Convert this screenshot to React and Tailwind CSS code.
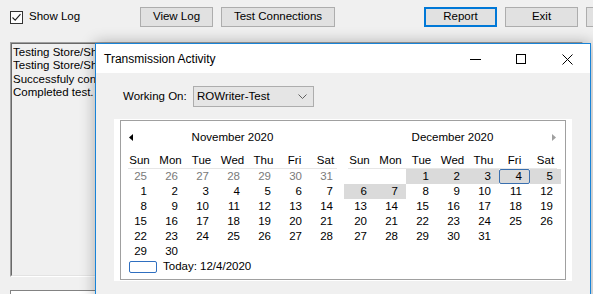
import React from "react";

const font = { fontFamily: '"Liberation Sans", Arial, sans-serif' };

function Btn({ children, w = "w-[73px]", active = false }) {
  return (
    <div
      className={`${w} h-[20px] shrink-0 flex items-center justify-center bg-[#e1e1e1] text-[11.5px] text-black ${
        active ? "border-2 border-[#0078d7]" : "border border-[#adadad]"
      }`}
    >
      {children}
    </div>
  );
}

function Month({ title, leftArrow, rightArrow, days }) {
  const heads = ["Sun", "Mon", "Tue", "Wed", "Thu", "Fri", "Sat"];
  return (
    <div className="w-[217px] shrink-0 flex flex-col">
      <div className="h-[33px] flex items-center">
        <div className="w-[4px] ml-[5px] flex items-center">
          {leftArrow && (
            <svg width="4" height="7" viewBox="0 0 4 7">
              <polygon points="4,0 0,3.5 4,7" fill="#000" />
            </svg>
          )}
        </div>
        <div className="flex-1 text-center text-[11.5px] text-black">{title}</div>
        <div className="w-[4px] mr-[5px] flex items-center">
          {rightArrow && (
            <svg width="4" height="7" viewBox="0 0 4 7">
              <polygon points="0,0 4,3.5 0,7" fill="#a0a0a0" />
            </svg>
          )}
        </div>
      </div>
      <div className="h-[14px] grid grid-cols-7">
        {heads.map((h) => (
          <div key={h} className="flex items-center justify-center text-[11.5px] text-black leading-none">
            {h}
          </div>
        ))}
      </div>
      <div className="h-[1px] mx-[4px] bg-[#e6e6e6]" />
      <div className="grid grid-cols-7">
        {days.map((d, i) => (
          <div
            key={i}
            className={`h-[15px] flex items-center justify-end text-[11.5px] leading-none ${
              d.gray ? "text-[#7a7a7a]" : "text-black"
            } ${d.hl ? "bg-[#dadada]" : ""} ${
              d.sel ? "border border-[#3a6fae] rounded-[2px] pr-[7px]" : "pr-[8px]"
            }`}
          >
            {d.n}
          </div>
        ))}
      </div>
    </div>
  );
}

export default function App() {
  const nov = [];
  for (let n = 25; n <= 31; n++) nov.push({ n, gray: true });
  for (let n = 1; n <= 30; n++) nov.push({ n });
  while (nov.length < 42) nov.push({ n: "" });

  const dec = [{ n: "" }, { n: "" }];
  for (let n = 1; n <= 31; n++) {
    dec.push({ n, hl: n <= 7, sel: n === 4 });
  }
  while (dec.length < 42) dec.push({ n: "" });

  return (
    <div className="w-[593px] h-[294px] bg-[#f0f0f0] relative overflow-hidden" style={font}>
      {/* top row */}
      <div className="flex items-center pt-[7px] h-[27px]">
        <div className="w-[140px] shrink-0 flex items-center pl-[10px]">
          <div className="w-[13px] h-[13px] mt-[1px] border border-[#333] bg-white flex items-center justify-center">
            <svg width="11" height="11" viewBox="0 0 11 11">
              <polyline points="1.5,5.5 4.2,8.2 9.5,2.2" fill="none" stroke="#222" strokeWidth="1.1" />
            </svg>
          </div>
          <span className="ml-[6px] text-[11.5px] text-black">Show Log</span>
        </div>
        <Btn>View Log</Btn>
        <div className="w-[8px] shrink-0" />
        <Btn w="w-[114px]">Test Connections</Btn>
        <div className="w-[89px] shrink-0" />
        <Btn active>Report</Btn>
        <div className="w-[8px] shrink-0" />
        <Btn>Exit</Btn>
        <div className="w-[8px] shrink-0" />
        <Btn> </Btn>
      </div>

      {/* log box */}
      <div className="ml-[10px] mt-[15px] w-[573px] h-[235px] border-t border-l border-[#a0a0a0] border-b border-r border-b-white border-r-white">
        <div className="w-full h-full border-t border-l border-[#696969] border-b border-r border-b-[#e3e3e3] border-r-[#e3e3e3] pt-[2px] pl-[1px]">
          <div className="w-[82px] overflow-hidden text-[11.5px] leading-[13.4px] text-black whitespace-nowrap">
            <div>Testing Store/Shop connection...</div>
            <div>Testing Store/Shop database...</div>
            <div>Successfuly connected.</div>
            <div>Completed test.</div>
          </div>
        </div>
      </div>

      {/* bottom box */}
      <div className="ml-[10px] mt-[13px] w-[573px] h-[20px] bg-white border-t border-l border-[#828282]" />

      {/* dialog window */}
      <div className="absolute left-[95px] top-[43px] w-[496px] h-[262px] border border-[#1883d7] bg-[#f0f0f0] shadow-[0_0_14px_rgba(0,0,0,0.3)] flex flex-col">
        <div className="h-[29px] bg-white flex items-center shrink-0">
          <div className="pl-[8px] flex-1 text-[12px] text-black">Transmission Activity</div>
          <div className="w-[46px] h-full flex items-center justify-center">
            <div className="w-[11px] h-[1px] bg-black mt-[1px]" />
          </div>
          <div className="w-[46px] h-full flex items-center justify-center">
            <div className="w-[10px] h-[10px] border border-black mt-[1px]" />
          </div>
          <div className="w-[46px] h-full flex items-center justify-center">
            <svg width="11" height="11" viewBox="0 0 11 11" className="mt-[1px]">
              <line x1="0.5" y1="0.5" x2="10.5" y2="10.5" stroke="#000" strokeWidth="1" />
              <line x1="10.5" y1="0.5" x2="0.5" y2="10.5" stroke="#000" strokeWidth="1" />
            </svg>
          </div>
        </div>

        <div className="flex items-center pt-[13px] pl-[27px]">
          <div className="w-[70px] text-[11.5px] text-black">Working On:</div>
          <div className="w-[121px] h-[21px] border border-[#adadad] bg-[#e5e5e5] flex items-center pl-[3px] pr-[6px]">
            <span className="flex-1 text-[11.5px] text-black">ROWriter-Test</span>
            <svg width="9" height="5" viewBox="0 0 9 5">
              <polyline points="0.5,0.5 4.5,4.5 8.5,0.5" fill="none" stroke="#606060" strokeWidth="1" />
            </svg>
          </div>
        </div>

        {/* calendar */}
        <div className="ml-[18px] mt-[12px] w-[458px] bg-white pt-[1px] pb-[1px] pl-[6px] pr-[6px]">
          <div className="border border-[#a0a0a0] h-[160px] flex flex-col">
            <div className="flex pl-[3px] pr-[4px] gap-[3px]">
              <Month title="November 2020" leftArrow days={nov} />
              <Month title="December 2020" rightArrow days={dec} />
            </div>
            <div className="flex items-center h-[16px] pl-[8px]">
              <div className="w-[28px] h-[12px] border border-[#2f6fc0] rounded-[2px]" />
              <span className="ml-[6px] text-[11.5px] text-black">Today: 12/4/2020</span>
            </div>
          </div>
        </div>
      </div>
    </div>
  );
}
